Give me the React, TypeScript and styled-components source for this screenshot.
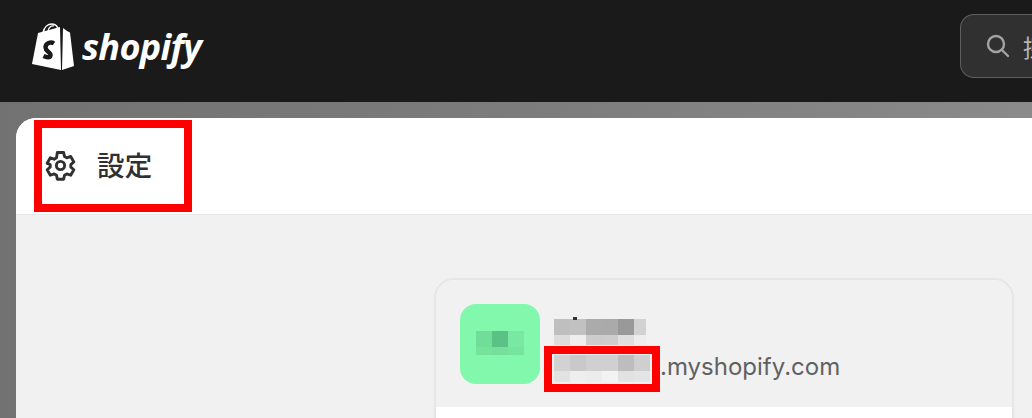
import React from 'react';
import styled, { createGlobalStyle } from 'styled-components';

const GlobalStyle = createGlobalStyle`
  html, body {
    margin: 0;
    padding: 0;
    background: #7b7b7b;
    font-family: Inter, "Noto Sans CJK JP", sans-serif;
  }
`;

const Page = styled.div`
  position: relative;
  width: 1032px;
  height: 418px;
  overflow: hidden;
`;

const TopBar = styled.header`
  height: 102px;
  background: #1a1a1a;
  display: flex;
  align-items: center;
  justify-content: space-between;
  padding: 0 0 8px 31px;
  box-sizing: border-box;
`;

const Logo = styled.div`
  display: flex;
  align-items: center;
  gap: 7px;
`;

const Wordmark = styled.span`
  font-family: "Open Sans", sans-serif;
  font-style: italic;
  font-weight: 700;
  font-size: 36px;
  letter-spacing: -0.7px;
  line-height: 48px;
  color: #fff;
`;

const SearchBox = styled.div`
  width: 72px;
  height: 64px;
  box-sizing: border-box;
  margin-top: -2px;
  padding-left: 24px;
  display: flex;
  align-items: center;
  gap: 12px;
  flex: none;
  background: #303030;
  border: 1px solid #5f5f5f;
  border-right: none;
  border-radius: 14px 0 0 14px;
  color: #b5b5b5;
  font-size: 24px;
  white-space: nowrap;
  overflow: hidden;
`;

const Backdrop = styled.div`
  height: 316px;
  padding: 16px 0 0 16px;
  box-sizing: border-box;
  background: linear-gradient(90deg, #727272 0, #7c7c7c 50%, #8a8a8a 100%);
`;

const Panel = styled.main`
  height: 300px;
  background: #f1f1f1;
  border-radius: 20px 0 0 0;
  overflow: hidden;
`;

const PanelHeader = styled.div`
  height: 97px;
  box-sizing: border-box;
  background: #fff;
  border-bottom: 1px solid #e6e6e6;
  display: flex;
  align-items: center;
  gap: 20px;
  padding: 0 0 2px 28px;
  color: #303030;
`;

const PanelTitle = styled.h1`
  margin: -2px 0 0;
  font-family: "Noto Sans CJK JP", sans-serif;
  font-size: 27.5px;
  font-weight: 500;
  letter-spacing: 0.2px;
  color: #303030;
`;

const PanelBody = styled.div`
  padding: 63px 18px 0 418px;
`;

const Card = styled.section`
  height: 200px;
  box-sizing: border-box;
  border: 2px solid #e6e6e6;
  border-radius: 20px 20px 0 0;
  overflow: hidden;
`;

const StoreRow = styled.div`
  height: 127px;
  box-sizing: border-box;
  display: flex;
  align-items: flex-start;
  padding: 24px 0 0 24px;
  gap: 14px;
  background: #f1f1f1;
`;

const Avatar = styled.div`
  width: 80px;
  height: 80px;
  flex: none;
  border-radius: 16px;
  background: #82f8ac;
  display: flex;
  align-items: center;
  justify-content: center;
  padding-bottom: 2px;
  box-sizing: border-box;
`;

const CardBottom = styled.div`
  height: 72px;
  background: #fff;
`;

const StoreInfo = styled.div`
  display: flex;
  flex-direction: column;
  padding-top: 15px;
  gap: 10px;
`;

const DomainRow = styled.div`
  display: flex;
  align-items: flex-start;
`;

const Domain = styled.span`
  margin-left: 10px;
  margin-top: -4px;
  font-size: 24px;
  line-height: 32px;
  color: #616161;
`;

const Mosaic = styled.div<{ $cols: string; $rows: string }>`
  display: grid;
  grid-template-columns: ${({ $cols }) => $cols};
  grid-template-rows: ${({ $rows }) => $rows};
`;

const Cell = styled.div<{ $c: string }>`
  background: ${({ $c }) => $c};
`;

const RedFrame = styled.div<{ $x: number; $y: number; $w: number; $h: number }>`
  position: absolute;
  left: ${({ $x }) => $x}px;
  top: ${({ $y }) => $y}px;
  width: ${({ $w }) => $w}px;
  height: ${({ $h }) => $h}px;
  box-sizing: border-box;
  border: 8px solid #ff0000;
`;

const NameDot = styled.div`
  position: absolute;
  left: 573px;
  top: 317px;
  width: 4px;
  height: 3px;
  background: #333;
`;

const BagIcon = () => (
  <svg width="44" height="48" viewBox="0 0 44 48" fill="#fff" aria-hidden="true">
    <path d="M7 10 L29 4 L30 47 L1 41 Z" />
    <path d="M32 5 L36 8 L39 9.5 L43 43 L31 47 Z" />
    <path d="M12 10 C13 4 17 1 21 1 C25 1 27 4 27.5 8" fill="none" stroke="#fff" strokeWidth="1.6" />
    <path d="M17 8 C18 4 20 2.5 23 3" fill="none" stroke="#fff" strokeWidth="1.2" />
    <path
      d="M23 20.5 C20 18.5 14.5 20 14.5 24.5 C14.5 28.5 20 29 19.5 32.5 C19 35 15.5 34.5 12.5 33"
      fill="none"
      stroke="#1a1a1a"
      strokeWidth="4.4"
    />
  </svg>
);

const GearIcon = () => (
  <svg width="33" height="33" viewBox="0 0 24 24" fill="none" stroke="#303030" strokeWidth="2.1" strokeLinejoin="round" aria-hidden="true">
    <path d="M9.7 2.5h4.6l.6 2.9 1.7 1 2.8-1 2.3 4-2.2 1.9v1.9l2.2 1.9-2.3 4-2.8-1-1.7 1-.6 2.9H9.7l-.6-2.9-1.7-1-2.8 1-2.3-4 2.2-1.9v-1.9L2.3 10.4l2.3-4 2.8 1 1.7-1z" />
    <circle cx="12" cy="12" r="3" />
  </svg>
);

const SearchIcon = () => (
  <svg width="26" height="26" viewBox="0 0 26 26" fill="none" stroke="#a3a3a3" strokeWidth="2.4" strokeLinecap="round" style={{ flex: 'none' }} aria-hidden="true">
    <circle cx="11" cy="11" r="8" />
    <path d="M17 17 L23 23" />
  </svg>
);

const nameCells = ['#bfbfbf', '#c1c1c1', '#ababab', '#aaaaaa', '#999999', '#d2d2d2', '#dcdcdc', '#eeeeee', '#cccccc', '#cdcdcd', '#dedede', '#ededed'];
const shopCells = ['#d2d2d2', '#c9c9c9', '#d0d0d0', '#d0d0d0', '#bdbdbd', '#cfcfcf', '#e2e2e2', '#eeeeee', '#ececec', '#f2f2f2', '#e2e2e2', '#e4e4e4'];
const avatarCells = ['#70dd99', '#5cc184', '#79e8a2', '#76e39d', '#74e09b', '#77e49e'];

export default function App() {
  return (
    <Page>
      <GlobalStyle />
      <TopBar>
        <Logo>
          <BagIcon />
          <Wordmark>shopify</Wordmark>
        </Logo>
        <SearchBox>
          <SearchIcon />
          探す
        </SearchBox>
      </TopBar>
      <Backdrop>
        <Panel>
          <PanelHeader>
            <GearIcon />
            <PanelTitle>設定</PanelTitle>
          </PanelHeader>
          <PanelBody>
            <Card>
              <StoreRow>
                <Avatar>
                  <Mosaic $cols="repeat(3, 16px)" $rows="16px 8px">
                    {avatarCells.map((c, i) => <Cell key={i} $c={c} />)}
                  </Mosaic>
                </Avatar>
                <StoreInfo>
                  <Mosaic $cols="repeat(5, 16px) 12px" $rows="16px 10px">
                    {nameCells.map((c, i) => <Cell key={i} $c={c} />)}
                  </Mosaic>
                  <DomainRow>
                    <Mosaic $cols="repeat(6, 16px)" $rows="16px 11px">
                      {shopCells.map((c, i) => <Cell key={i} $c={c} />)}
                    </Mosaic>
                    <Domain>.myshopify.com</Domain>
                  </DomainRow>
                </StoreInfo>
              </StoreRow>
              <CardBottom />
            </Card>
          </PanelBody>
        </Panel>
      </Backdrop>
      <NameDot />
      <RedFrame $x={34} $y={120} $w={158} $h={92} />
      <RedFrame $x={544} $y={346} $w={116} $h={46} />
    </Page>
  );
}
